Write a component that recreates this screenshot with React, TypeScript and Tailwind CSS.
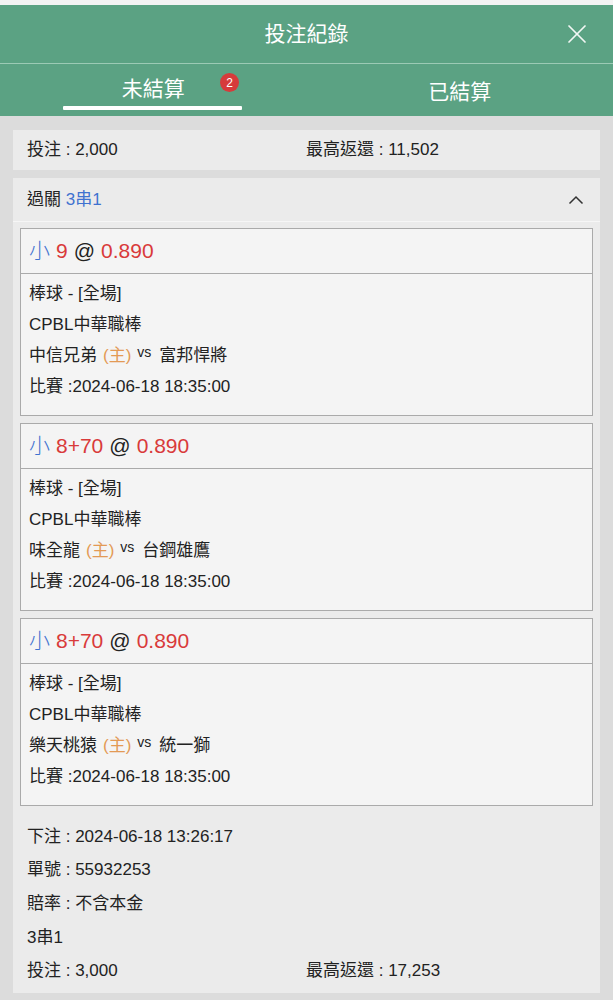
import { X } from "lucide-react";

type Leg = {
  line: string;
  home: string;
  away: string;
};

const legs: Leg[] = [
  { line: "9", home: "中信兄弟", away: "富邦悍將" },
  { line: "8+70", home: "味全龍", away: "台鋼雄鷹" },
  { line: "8+70", home: "樂天桃猿", away: "統一獅" },
];

const font = {
  fontFamily: '"Liberation Sans", "Noto Sans CJK TC", sans-serif',
};

function LegCard({ leg }: { leg: Leg }) {
  return (
    <div className="border border-[#aaaaaa] bg-[#f4f4f4]">
      <div className="flex h-[45px] items-center border-b border-[#aaaaaa] px-[8px] text-[21px]">
        <span className="font-light text-[#3f72d0]">小</span>
        <span className="ml-[6px] text-[#d93a3a]">{leg.line}</span>
        <span className="ml-[6px] text-[#222]">@</span>
        <span className="ml-[6px] text-[#d93a3a]">0.890</span>
      </div>
      <div className="px-[8px] pt-[4px] pb-[13px] text-[17px] text-[#222]">
        <div className="flex h-[31px] items-center">棒球 - [全場]</div>
        <div className="flex h-[31px] items-center">CPBL中華職棒</div>
        <div className="flex h-[31px] items-center">
          {leg.home}
          <span className="ml-[6px] text-[#e39a55]">(主)</span>
          <span className="ml-[6px] -translate-y-[3px] text-[14px]">vs</span>
          <span className="ml-[8px]">{leg.away}</span>
        </div>
        <div className="flex h-[31px] items-center">比賽 :2024-06-18 18:35:00</div>
      </div>
    </div>
  );
}

export default function App() {
  return (
    <div className="min-h-screen w-full bg-[#dcdcdc]" style={font}>
      <div className="h-[5px] bg-[#f3f3f3]" />
      <div className="relative flex h-[58px] items-center justify-center bg-[#5ba283] text-[21px] text-white">
        投注紀錄
        <X className="absolute right-[20px] h-[32px] w-[32px] text-[#f2f7f4]" strokeWidth={1.3} />
      </div>
      <div className="h-px bg-[#9ccab5]" />
      <div className="flex h-[52px] bg-[#5ba283] text-[21px] text-white">
        <div className="relative flex w-1/2 items-center justify-center">
          <span className="-translate-y-[1px]">未結算</span>
          <span className="absolute left-[220px] top-[9px] flex h-[19px] w-[19px] items-center justify-center rounded-full bg-[#d63b3b] text-[12px]">
            2
          </span>
          <span className="absolute bottom-[6px] left-[63px] h-[4px] w-[179px] rounded-[1px] bg-white" />
        </div>
        <div className="flex w-1/2 items-center justify-center">
          <span className="translate-y-[2px]">已結算</span>
        </div>
      </div>

      <div className="px-[13px] pt-[14px] pb-[8px] text-[17px] text-[#222]">
        <div className="flex h-[40px] items-center bg-[#ebebeb] px-[14px]">
          <div className="w-[279px]">投注 : 2,000</div>
          <div>最高返還 : 11,502</div>
        </div>

        <div className="mt-[8px] bg-[#ebebeb]">
          <div className="flex h-[44px] items-center justify-between border-b border-[#f6f6f6] pl-[14px] pr-[16px]">
            <div>
              過關 <span className="text-[#3f72d0]">3串1</span>
            </div>
            <svg width="16" height="10" viewBox="0 0 16 10" fill="none">
              <path d="M1.5 8.5 L8 2 L14.5 8.5" stroke="#333" strokeWidth="1.5" />
            </svg>
          </div>

          <div className="flex flex-col gap-[7px] px-[7px] pt-[6px]">
            {legs.map((leg, i) => (
              <LegCard key={i} leg={leg} />
            ))}
          </div>

          <div className="px-[14px] pt-[14px] pb-[6px]">
            <div className="flex h-[33px] items-center">下注 : 2024-06-18 13:26:17</div>
            <div className="flex h-[34px] items-center">單號 : 55932253</div>
            <div className="flex h-[34px] items-center">賠率 : 不含本金</div>
            <div className="flex h-[33px] items-center">3串1</div>
            <div className="flex h-[33px] items-center">
              <div className="w-[279px]">投注 : 3,000</div>
              <div>最高返還 : 17,253</div>
            </div>
          </div>
        </div>
      </div>
    </div>
  );
}
